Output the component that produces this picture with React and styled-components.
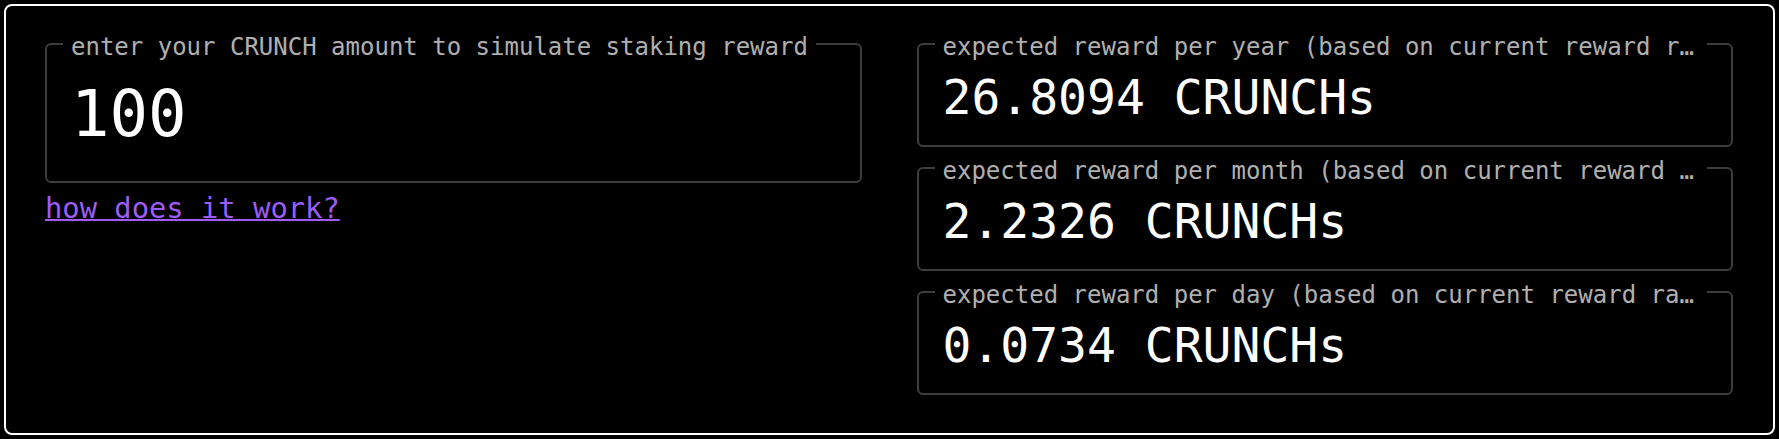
import styled, { createGlobalStyle } from 'styled-components';

const GlobalStyle = createGlobalStyle`
  html, body {
    margin: 0;
    padding: 0;
    background: #000;
  }
  body {
    font-family: "DejaVu Sans Mono", "Liberation Mono", monospace;
    color: #fff;
  }
`;

const Frame = styled.div`
  box-sizing: border-box;
  margin: 4px;
  height: calc(100vh - 8px);
  border: 2px solid #fff;
  border-radius: 8px;
  background: #000;
  padding: 21px 40px 0 39px;
  display: grid;
  grid-template-columns: 1fr 1fr;
  column-gap: 55px;
  align-items: start;
`;

const Column = styled.div`
  display: flex;
  flex-direction: column;
  gap: ${({ $gap }) => $gap || 0}px;
  min-width: 0;
`;

const Field = styled.fieldset`
  box-sizing: border-box;
  margin: 0;
  min-width: 0;
  height: ${({ $height }) => $height}px;
  padding: 0 16px;
  border: 2px solid rgba(255, 255, 255, 0.24);
  border-radius: 6px;
`;

const Label = styled.legend`
  box-sizing: border-box;
  max-width: calc(100% - 8px);
  padding: 6px 8px 0;
  font-size: 24px;
  line-height: 28px;
  color: rgba(255, 255, 255, 0.7);
  white-space: nowrap;
  overflow: hidden;
  text-overflow: ellipsis;
`;

const Value = styled.div`
  margin-top: ${({ $offset }) => $offset}px;
  padding-left: 8px;
  font-size: ${({ $size }) => $size}px;
  line-height: normal;
  color: #fff;
  white-space: nowrap;
`;

const HelpLink = styled.a`
  margin-top: 8px;
  font-size: 28.8px;
  line-height: normal;
  color: #9d5cf7;
  text-decoration: underline;
  text-decoration-thickness: 2px;
  align-self: flex-start;
  cursor: pointer;
`;

const rewards = [
  { period: 'year', amount: '26.8094' },
  { period: 'month', amount: '2.2326' },
  { period: 'day', amount: '0.0734' },
];

export default function App() {
  return (
    <>
      <GlobalStyle />
      <Frame>
        <Column>
          <Field $height={156}>
            <Label>enter your CRUNCH amount to simulate staking reward</Label>
            <Value $size={64} $offset={16}>100</Value>
          </Field>
          <HelpLink href="#">how does it work?</HelpLink>
        </Column>
        <Column $gap={4}>
          {rewards.map((r) => (
            <Field key={r.period} $height={120}>
              <Label>expected reward per {r.period} (based on current reward rate)</Label>
              <Value $size={48} $offset={8}>{r.amount} CRUNCHs</Value>
            </Field>
          ))}
        </Column>
      </Frame>
    </>
  );
}
